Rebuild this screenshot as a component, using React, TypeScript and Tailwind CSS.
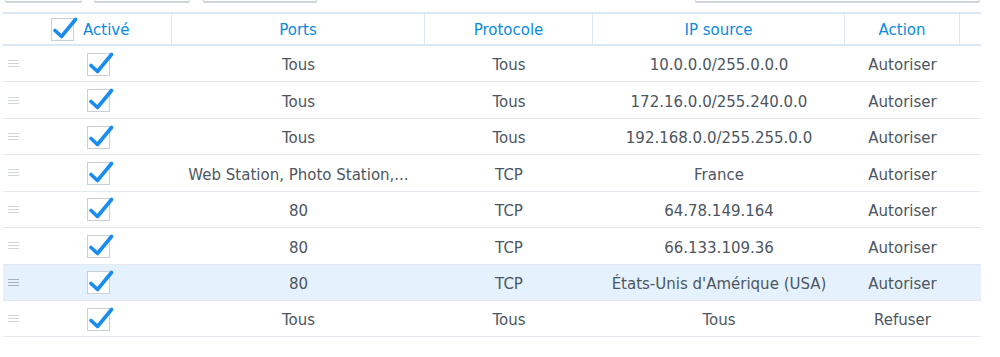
import React from 'react';

type Rule = { ports: string; proto: string; ip: string; action: string };

const rules: Rule[] = [
  { ports: 'Tous', proto: 'Tous', ip: '10.0.0.0/255.0.0.0', action: 'Autoriser' },
  { ports: 'Tous', proto: 'Tous', ip: '172.16.0.0/255.240.0.0', action: 'Autoriser' },
  { ports: 'Tous', proto: 'Tous', ip: '192.168.0.0/255.255.0.0', action: 'Autoriser' },
  { ports: 'Web Station, Photo Station,...', proto: 'TCP', ip: 'France', action: 'Autoriser' },
  { ports: '80', proto: 'TCP', ip: '64.78.149.164', action: 'Autoriser' },
  { ports: '80', proto: 'TCP', ip: '66.133.109.36', action: 'Autoriser' },
  { ports: '80', proto: 'TCP', ip: "États-Unis d'Amérique (USA)", action: 'Autoriser' },
  { ports: 'Tous', proto: 'Tous', ip: 'Tous', action: 'Refuser' },
];

// case cochée façon DSM : boîte grise, coche bleue qui déborde
const CheckBox = () => (
  <svg width="27" height="26" viewBox="0 0 27 26" className="shrink-0">
    <rect x="0.5" y="2.5" width="22" height="22" fill="#fff" stroke="#c8cfd6" />
    <path d="M4 14.5 L10.5 20.5 L24.5 3.5" fill="none" stroke="#1a8cef" strokeWidth="3.6" strokeLinecap="round" strokeLinejoin="round" />
  </svg>
);

const Handle = ({ dark }: { dark?: boolean }) => (
  <div className="flex flex-col gap-[2px] w-[11px]">
    <span className={`h-px ${dark ? 'bg-[#a9b0b7]' : 'bg-[#cfd4d9]'}`} />
    <span className={`h-px ${dark ? 'bg-[#a9b0b7]' : 'bg-[#cfd4d9]'}`} />
    <span className={`h-px ${dark ? 'bg-[#a9b0b7]' : 'bg-[#cfd4d9]'}`} />
  </div>
);

const cols = 'grid grid-cols-[24px_145px_253px_168px_252px_115px_21px]';

export default function App() {
  return (
    <div
      className="w-[1000px] h-[357px] bg-white overflow-hidden text-[15px] text-[#4c5661]"
      style={{ fontFamily: '"DejaVu Sans", Verdana, sans-serif' }}
    >
      {/* bas des boutons de la barre d'outils */}
      <div className="flex h-[3px]">
        <div className="ml-[5px] w-[77px] border-b-2 border-x border-[#cdd4dc] rounded-b-[2px]" />
        <div className="ml-[12px] w-[96px] border-b-2 border-x border-[#cdd4dc] rounded-b-[2px]" />
        <div className="ml-[13px] w-[114px] border-b-2 border-x border-[#cdd4dc] rounded-b-[2px]" />
        <div className="ml-[378px] w-[285px] border-b-2 border-x border-[#cdd4dc] rounded-b-[2px]" />
      </div>

      <div className="mt-[9px] ml-[3px] w-[978px]">
        <div className={`${cols} h-[34px] border-t-2 border-b-2 border-[#dde7f1] text-[#0c8ae3]`}>
          <div className="col-span-2 flex items-center pl-[48px] gap-[5px] border-r border-[#dde7f1]">
            <CheckBox />
            <span className="pt-[2px]">Activé</span>
          </div>
          <div className="flex items-center justify-center pt-[2px] border-r border-[#dde7f1]">Ports</div>
          <div className="flex items-center justify-center pt-[2px] border-r border-[#dde7f1]">Protocole</div>
          <div className="flex items-center justify-center pt-[2px] border-r border-[#dde7f1]">IP source</div>
          <div className="flex items-center justify-center pt-[2px] border-r border-[#dde7f1]">Action</div>
          <div />
        </div>

        {rules.map((r, i) => {
          const sel = i === 6;
          return (
            <div
              key={i}
              className={`${cols} h-[36.43px] border-b border-[#e3e9ef] ${sel ? 'bg-[#e5f2fd]' : ''}`}
            >
              <div className="flex items-center pl-[5px]">
                <Handle dark={sel} />
              </div>
              <div className="flex items-center pl-[60px]">
                <CheckBox />
              </div>
              <div className="flex items-center justify-center pt-[4px]">{r.ports}</div>
              <div className="flex items-center justify-center pt-[4px]">{r.proto}</div>
              <div className="flex items-center justify-center pt-[4px]">{r.ip}</div>
              <div className="flex items-center justify-center pt-[4px]">{r.action}</div>
              <div />
            </div>
          );
        })}
      </div>
    </div>
  );
}
